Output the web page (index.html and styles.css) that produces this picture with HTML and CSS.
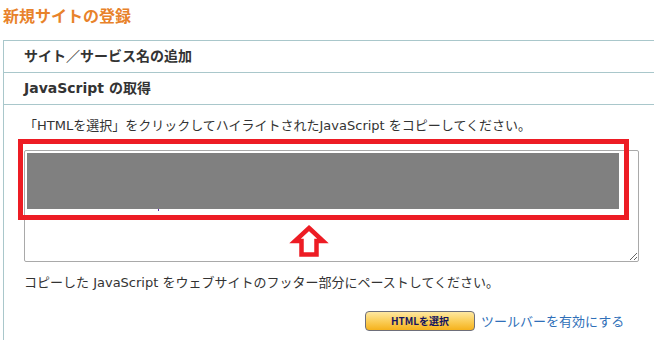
FILE: index.html
```html
<!DOCTYPE html>
<html lang="ja">
<head>
<meta charset="utf-8">
<title>新規サイトの登録</title>
<link rel="stylesheet" href="styles.css">
</head>
<body>
<h1 class="title">新規サイトの登録</h1>
<div class="panel">
  <div class="step">サイト／サービス名の追加</div>
  <div class="step">JavaScript の取得</div>
  <div class="content">
    <p class="note">「HTMLを選択」をクリックしてハイライトされたJavaScript をコピーしてください。</p>
    <div class="code-wrap">
      <textarea class="code" readonly></textarea>
      <div class="selection"></div>
      <div class="caret"></div>
      <div class="callout"></div>
      <svg class="arrow" width="40" height="36" viewBox="0 0 40 36">
        <path d="M20 5 L34 18 L27.5 18 L27.5 31.5 L12.5 31.5 L12.5 18 L6 18 Z" fill="#fff" stroke="#ed1c24" stroke-width="4.5" stroke-linejoin="miter"/>
      </svg>
    </div>
    <p class="note after">コピーした JavaScript をウェブサイトのフッター部分にペーストしてください。</p>
    <div class="actions">
      <button class="btn" type="button">HTMLを選択</button>
      <a class="link" href="#">ツールバーを有効にする</a>
    </div>
  </div>
</div>
</body>
</html>
```

FILE: styles.css
```css
html, body {
  margin: 0;
  padding: 0;
  background: #fff;
}
body {
  font-family: "DejaVu Sans", "Noto Sans CJK JP", sans-serif;
  color: #333;
  width: 654px;
  height: 340px;
  overflow: hidden;
}
.title {
  margin: 0 0 10px 0;
  padding: 5px 0 0 3px;
  height: 25px;
  line-height: 20px;
  font-size: 16px;
  font-weight: bold;
  color: #e8822a;
  font-family: "Noto Sans CJK JP", sans-serif;
}
.panel {
  margin-left: 3px;
  border-left: 1px solid #a9c7cb;
  border-top: 1px solid #a9c7cb;
  height: 300px;
}
.step {
  height: 31px;
  line-height: 31px;
  border-bottom: 1px solid #a9c7cb;
  padding-left: 20px;
  font-size: 14px;
  font-weight: bold;
  color: #333;
}
.content {
  padding: 11px 0 0 20px;
}
.note {
  margin: 0;
  font-size: 13px;
  line-height: 20px;
  color: #333;
}
.note.after {
  margin-top: 11px;
}
.code-wrap {
  position: relative;
  margin-top: 14px;
  width: 615px;
  height: 112px;
}
.code {
  box-sizing: border-box;
  display: block;
  width: 615px;
  height: 112px;
  margin: 0;
  border: 1px solid #a9a9a9;
  border-radius: 2px;
  background: #fff;
  resize: both;
}
.selection {
  position: absolute;
  left: 3px;
  top: 3px;
  width: 592px;
  height: 56px;
  background: #808080;
}
.caret {
  position: absolute;
  left: 134px;
  top: 59px;
  width: 1px;
  height: 2px;
  background: #5a2ea6;
}
.callout {
  position: absolute;
  left: -6px;
  top: -11px;
  width: 611px;
  height: 81px;
  box-sizing: border-box;
  border: 5px solid #ed1c24;
}
.arrow {
  position: absolute;
  left: 265px;
  top: 73px;
}
.actions {
  display: flex;
  align-items: center;
  gap: 6px;
  margin-top: 18px;
  padding-left: 341px;
}
.btn {
  box-sizing: border-box;
  width: 110px;
  height: 20px;
  padding: 0;
  border: 1px solid #6e6f7a;
  border-radius: 4px;
  background: linear-gradient(#fee8a2, #fbd160 45%, #f5b21c);
  color: #141460;
  font-family: "Noto Sans CJK JP", sans-serif;
  font-size: 10px;
  font-weight: bold;
  line-height: 18px;
}
.link {
  font-family: "Noto Sans CJK JP", sans-serif;
  font-size: 13px;
  color: #2f6fb8;
  text-decoration: none;
  line-height: 20px;
}
```
